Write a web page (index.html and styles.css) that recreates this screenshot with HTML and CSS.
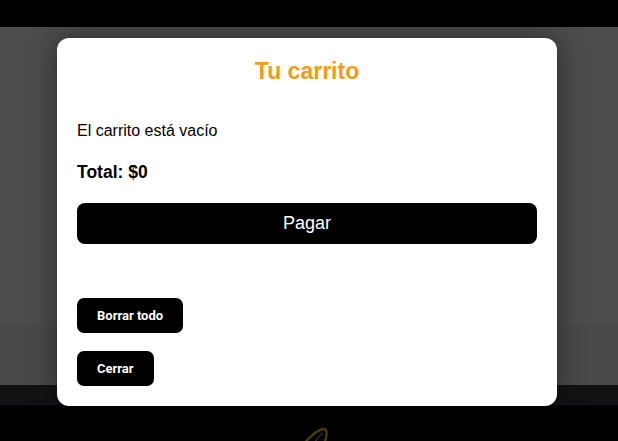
FILE: index.html
```html
<!DOCTYPE html>
<html lang="es">
<head>
<meta charset="utf-8">
<title>Tu carrito</title>
<link rel="stylesheet" href="styles.css">
</head>
<body>
<div class="page">
  <header class="topbar"></header>
  <section class="hero"></section>
  <section class="band"></section>
  <div class="strip"></div>
  <footer class="footer">
    <svg class="logo" width="60" height="40" viewBox="0 0 60 40">
      <path d="M16 40 C 22 30, 32 20, 40 18 C 46 17, 44 28, 38 40" fill="none" stroke="#4a3d14" stroke-width="2.4" stroke-linecap="round"/>
      <path d="M28 38 C 32 30, 36 25, 40 22" fill="none" stroke="#3a3010" stroke-width="1.4"/>
    </svg>
  </footer>
</div>

<div class="modal">
  <h2 class="modal-title">Tu carrito</h2>
  <p class="empty">El carrito está vacío</p>
  <p class="total">Total: $0</p>
  <button class="btn-pay">Pagar</button>
  <button class="btn-small btn-clear">Borrar todo</button>
  <button class="btn-small btn-close">Cerrar</button>
</div>
</body>
</html>
```

FILE: styles.css
```css
* { box-sizing: border-box; }

html, body {
  margin: 0;
  padding: 0;
  background: #000;
  font-family: "Liberation Sans", Arial, sans-serif;
  overflow: hidden;
}

.page {
  display: flex;
  flex-direction: column;
  height: 441px;
}

.topbar { height: 27px; background: #000; flex: none; }
.hero { height: 298px; background: #4c4c4c; flex: none; }
.band { height: 60px; background: #494949; flex: none; }
.strip { height: 20px; background: #111214; flex: none; }
.footer {
  flex: 1;
  background: #000;
  display: flex;
  justify-content: center;
  padding-top: 6px;
}
.logo { display: block; margin-left: 8px; }

.modal {
  position: absolute;
  top: 38px;
  left: 57px;
  width: 500px;
  background: #fff;
  border-radius: 12px;
  padding: 20px;
  display: flex;
  flex-direction: column;
  align-items: flex-start;
  box-shadow: 0 0 28px rgba(0, 0, 0, 0.45);
}

.modal-title {
  align-self: stretch;
  margin: 0 0 37px;
  text-align: center;
  font-size: 23px;
  font-weight: bold;
  color: #f39c12;
}

.empty {
  margin: 0 0 22px;
  font-size: 16px;
  color: #000;
}

.total {
  margin: 0 0 20px;
  font-size: 17.5px;
  font-weight: bold;
  color: #000;
}

button {
  border: none;
  background: #000;
  color: #fff;
  cursor: pointer;
}

.btn-pay {
  align-self: stretch;
  height: 41px;
  border-radius: 8px;
  font-family: "Liberation Sans", Arial, sans-serif;
  font-size: 18px;
  padding: 0;
  margin-bottom: 54px;
}

.btn-small {
  height: 35px;
  padding: 0 20px;
  border-radius: 7px;
  font-family: Roboto, "Liberation Sans", sans-serif;
  font-size: 13px;
  font-weight: bold;
}

.btn-clear { margin-bottom: 18px; }
```
